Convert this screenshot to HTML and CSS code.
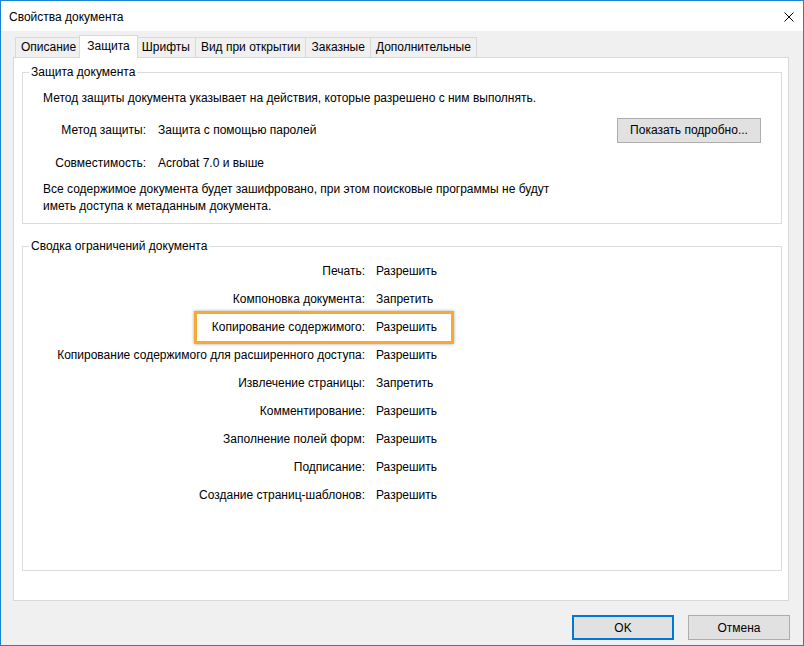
FILE: index.html
```html
<!DOCTYPE html>
<html lang="ru">
<head>
	<meta charset="UTF-8">
	<title>Свойства документа</title>
	<link rel="stylesheet" href="styles.css">
</head>
<body>

<div class="window">
	<div class="titlebar">
		<span class="title">Свойства документа</span>
		<svg class="close" width="10" height="10" viewBox="0 0 10 10">
			<path d="M0.5 0.5 L9.5 9.5 M9.5 0.5 L0.5 9.5" stroke="#000" stroke-width="1" fill="none"/>
		</svg>
	</div>

	<div class="content">
		<div class="tabs">
			<div class="tab">Описание</div>
			<div class="tab active">Защита</div>
			<div class="tab">Шрифты</div>
			<div class="tab">Вид при открытии</div>
			<div class="tab">Заказные</div>
			<div class="tab">Дополнительные</div>
		</div>

		<div class="panel">
			<fieldset class="group group-protect">
				<legend>Защита документа</legend>
				<p class="intro">Метод защиты документа указывает на действия, которые разрешено с ним выполнять.</p>
				<div class="prop prop-method">
					<span class="prop-label">Метод защиты:</span>
					<span class="prop-value">Защита с помощью паролей</span>
					<button class="btn btn-details">Показать подробно...</button>
				</div>
				<div class="prop prop-compat">
					<span class="prop-label">Совместимость:</span>
					<span class="prop-value">Acrobat 7.0 и выше</span>
				</div>
				<p class="note">Все содержимое документа будет зашифровано, при этом поисковые программы не будут<br>иметь доступа к метаданным документа.</p>
			</fieldset>

			<fieldset class="group group-summary">
				<legend>Сводка ограничений документа</legend>
				<div class="rules">
					<div class="rule"><span class="rule-label">Печать:</span><span>Разрешить</span></div>
					<div class="rule"><span class="rule-label">Компоновка документа:</span><span>Запретить</span></div>
					<div class="rule marked"><span class="rule-label">Копирование содержимого:</span><span>Разрешить</span></div>
					<div class="rule"><span class="rule-label">Копирование содержимого для расширенного доступа:</span><span>Разрешить</span></div>
					<div class="rule"><span class="rule-label">Извлечение страницы:</span><span>Запретить</span></div>
					<div class="rule"><span class="rule-label">Комментирование:</span><span>Разрешить</span></div>
					<div class="rule"><span class="rule-label">Заполнение полей форм:</span><span>Разрешить</span></div>
					<div class="rule"><span class="rule-label">Подписание:</span><span>Разрешить</span></div>
					<div class="rule"><span class="rule-label">Создание страниц-шаблонов:</span><span>Разрешить</span></div>
				</div>
			</fieldset>
		</div>
	</div>

	<div class="footer">
		<button class="btn btn-ok">OK</button>
		<button class="btn btn-cancel">Отмена</button>
	</div>
</div>

</body>
</html>
```

FILE: styles.css
```css
html, body {
	margin: 0;
	padding: 0;
	background: #fff;
}

body {
	font-family: "Liberation Sans", Arial, sans-serif;
	font-size: 12px;
	color: #000;
}

.window {
	width: 804px;
	height: 646px;
	box-sizing: border-box;
	border: 1px solid #1883d7;
	background: #f0f0f0;
	display: flex;
	flex-direction: column;
}

.titlebar {
	height: 30px;
	flex: none;
	background: #fff;
	display: flex;
	align-items: center;
	padding: 0 9px 0 8px;
	justify-content: space-between;
}

.title {
	padding-top: 1px;
}

.close {
	margin-top: 1px;
}

.content {
	padding: 4px 14px 0 12px;
}

/* tab strip */
.tabs {
	display: flex;
	align-items: flex-end;
	height: 22px;
	padding-left: 2px;
}

.tab {
	height: 19px;
	line-height: 18px;
	padding: 0 5px;
	border: 1px solid #d9d9d9;
	border-bottom: none;
	margin-left: -1px;
	background: #f0f0f0;
}

.tab:first-child {
	margin-left: 0;
}

.tab.active {
	position: relative;
	z-index: 1;
	height: 22px;
	line-height: 20px;
	margin: 0 -2px -1px -3px;
	padding: 0 7px;
	background: #fff;
}

.tab.active + .tab {
	margin-left: 0;
}

.panel {
	height: 544px;
	box-sizing: border-box;
	border: 1px solid #d9d9d9;
	background: #fff;
	padding: 6px 6px 0 8px;
}

/* group boxes */
.group {
	margin: 0;
	padding: 0;
	border: 1px solid #dcdcdc;
	min-width: 0;
}

.group legend {
	margin-left: 6px;
	padding: 0 2px 0 2px;
	line-height: 16px;
}

.group-protect {
	padding: 0 0 8px 0;
}

.intro {
	margin: 10px 0 0 20px;
	line-height: 17px;
}

.prop {
	display: flex;
	align-items: center;
}

.prop-label {
	width: 123px;
	text-align: right;
	flex: none;
}

.prop-value {
	margin-left: 12px;
	flex: 1;
}

.prop-method {
	margin-top: 11px;
	height: 24px;
	padding-right: 20px;
}

.prop-compat {
	margin-top: 12px;
	height: 17px;
}

.note {
	margin: 10px 0 0 20px;
	line-height: 17px;
}

.btn {
	font-family: inherit;
	font-size: 12px;
	color: #000;
	background: #e1e1e1;
	border: 1px solid #adadad;
	padding: 0;
	margin: 0;
	height: 25px;
}

.btn-details {
	width: 144px;
}

.group-summary {
	margin-top: 14px;
	height: 333px;
	box-sizing: border-box;
}

.rules {
	padding-top: 3px;
}

.rule {
	display: grid;
	grid-template-columns: 342px auto;
	column-gap: 11px;
	height: 28px;
	align-items: center;
	position: relative;
}

.rule-label {
	text-align: right;
}

.rule.marked::before {
	content: "";
	position: absolute;
	left: 171px;
	top: -2px;
	width: 260px;
	height: 33px;
	box-sizing: border-box;
	border: 3px solid #f8a935;
	box-shadow: 0 0 3px rgba(0, 0, 0, 0.35);
}

/* dialog buttons */
.footer {
	display: flex;
	justify-content: flex-end;
	gap: 14px;
	padding: 14px 13px 0 0;
}

.btn-ok {
	width: 102px;
	border: 2px solid #0078d7;
}

.btn-cancel {
	width: 102px;
}
```
